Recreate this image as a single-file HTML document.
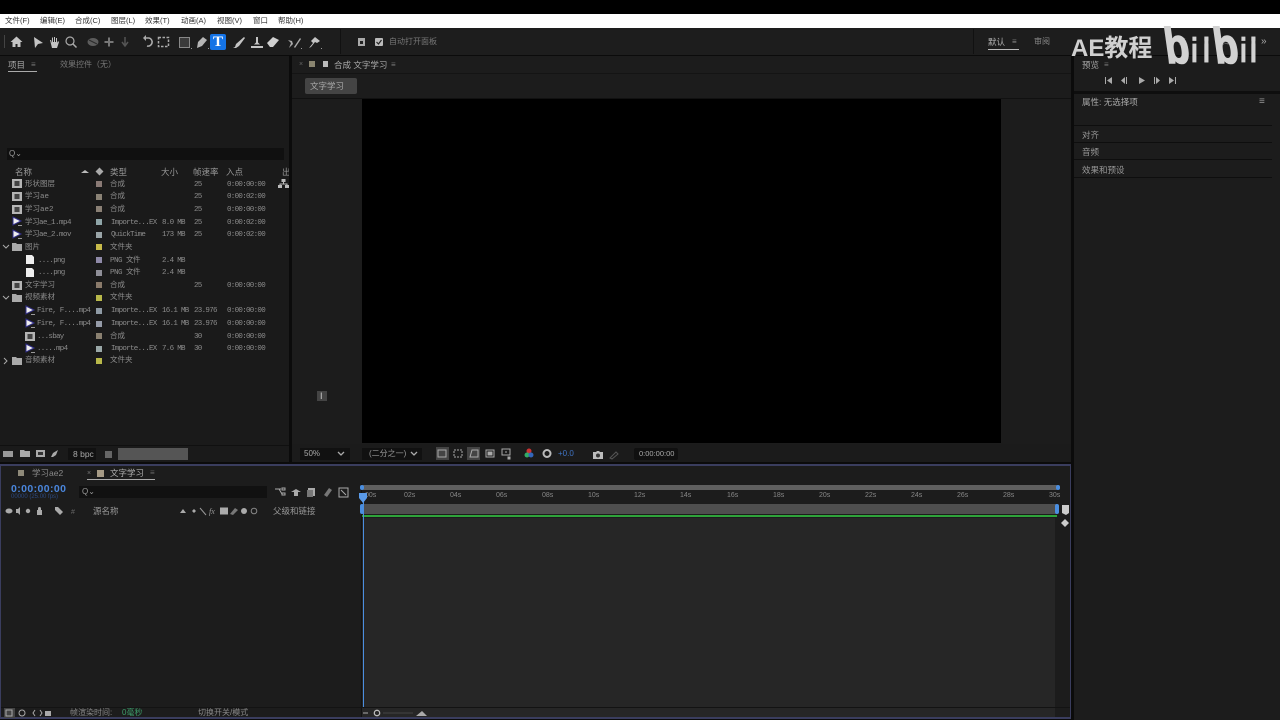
<!DOCTYPE html>
<html lang="zh"><head><meta charset="utf-8"><title>After Effects</title>
<style>
html,body{margin:0;padding:0;background:#0b0b0b}
#p{position:relative;width:1280px;height:720px;overflow:hidden;background:#0b0b0b;font-family:"Liberation Sans","Noto Sans CJK SC",sans-serif;color:#9a9a9a;font-size:8px;filter:blur(.3px)}
#p div,#p svg{position:absolute}
.t{white-space:nowrap;line-height:10px;height:10px}
.m{font-family:"Liberation Mono","Noto Sans CJK SC",monospace;font-size:7.5px;color:#8c8c8c}
.n{letter-spacing:-.7px}
.f{letter-spacing:-.5px}
.sw{width:6px;height:6px}
.w{color:#d2d2d2;font-weight:bold;line-height:1;white-space:nowrap;transform-origin:0 100%;-webkit-text-stroke:.8px #d2d2d2}
.b{font-size:50px;height:50px;top:21px;transform:skewX(8deg) scaleX(.8);-webkit-text-stroke:1.6px #d2d2d2}
.i{font-size:34px;height:34px;top:34px;transform:scaleX(.72)}
</style></head><body><div id="p">
<!-- top -->
<div style="left:0;top:0;width:1280px;height:14px;background:#000"></div>
<div style="left:0;top:14px;width:1280px;height:14px;background:#fff"></div>
<div class="t" style="left:5px;top:16px;color:#333;font-size:7.5px">文件(F)</div>
<div class="t" style="left:40px;top:16px;color:#333;font-size:7.5px">编辑(E)</div>
<div class="t" style="left:75px;top:16px;color:#333;font-size:7.5px">合成(C)</div>
<div class="t" style="left:111px;top:16px;color:#333;font-size:7.5px">图层(L)</div>
<div class="t" style="left:145px;top:16px;color:#333;font-size:7.5px">效果(T)</div>
<div class="t" style="left:181px;top:16px;color:#333;font-size:7.5px">动画(A)</div>
<div class="t" style="left:217px;top:16px;color:#333;font-size:7.5px">视图(V)</div>
<div class="t" style="left:253px;top:16px;color:#333;font-size:7.5px">窗口</div>
<div class="t" style="left:278px;top:16px;color:#333;font-size:7.5px">帮助(H)</div>
<!-- toolbar -->
<div style="left:0;top:28px;width:1280px;height:27px;background:#1d1d1d"></div>
<div style="left:340px;top:29px;width:1px;height:25px;background:#111"></div>
<div style="left:973px;top:29px;width:1px;height:25px;background:#111"></div>
<div style="left:210px;top:34px;width:16px;height:16px;background:#1473e6;border-radius:2px"></div>
<svg style="left:0;top:28px" width="340" height="27" viewBox="0 0 340 27" fill="#c4c4c4">
<rect x="4" y="7" width="1" height="13" fill="#444"/>
<path d="M16.500 8.500l-6 5.500h2v5h3v-3h2v3h3v-5h2z"/>
<path d="M34 9l9 6-5 1-3 4z"/>
<path d="M50 12h1l1 3V9.500h1V14h1V9h1v5h1v-4h1v5l1-2 1 1-2 6h-5z"/>
<circle cx="70" cy="13" r="4" fill="none" stroke="#aaa" stroke-width="1.200"/><path d="M73 16l3.500 3.500" stroke="#aaa" stroke-width="1.500"/>
<ellipse cx="93" cy="14" rx="5.500" ry="4" fill="#5c5c5c"/><path d="M89 12l8 4" stroke="#2a2a2a"/>
<path d="M109 9.500v9M104.500 14h9" stroke="#777" stroke-width="2"/><path d="M125 9v8M122 14l3 4 3-4" stroke="#555" stroke-width="1.500" fill="none"/>
<path d="M144 10h5a3.800 3.800 0 1 1-2 8" fill="none" stroke="#aaa" stroke-width="1.600"/><path d="M146 7v6l-3-3z" fill="#aaa"/>
<rect x="158.500" y="9.500" width="10" height="9" fill="none" stroke="#aaa" stroke-width="1.500" stroke-dasharray="2.500 1.500"/>
<rect x="179.500" y="9.500" width="10" height="10" fill="#3a3a3a" stroke="#888"/><rect x="191" y="20" width="1" height="1" fill="#999"/>
<path d="M197 20l1-6 5-5 4 3-5 6z" fill="#b5b5b5"/><rect x="208" y="20" width="1" height="1" fill="#999"/>
<path d="M233 20l2-1 1-3 8-7 1 1-6 8-3 2z" fill="#c4c4c4"/>
<path d="M251 20h12v-2h-12zM254 16.500h6l-2-2V9h-2v5.500z" fill="#c4c4c4"/>
<path d="M267 15l6-6 6 3-6 7h-3z" fill="#d0d0d0"/>
<path d="M288 12l3 3-2 5 4-4-1-3zM294 19l6-9 1 1-6 9z" fill="#aaa"/><rect x="301" y="20" width="1" height="1" fill="#999"/>
<path d="M309 20l4-5-2-2 4-4 5 4-3 2-2-1-4 5z" fill="#c4c4c4"/><rect x="321" y="20" width="1" height="1" fill="#999"/>
</svg>
<div class="t" style="left:212px;top:34px;width:12px;height:16px;text-align:center;color:#fff;font:bold 15px/16px 'Liberation Serif',serif">T</div>
<div style="left:358px;top:38px;width:7px;height:8px;background:#aaa"></div><div style="left:360px;top:41px;width:3px;height:3px;background:#222"></div>
<div style="left:375px;top:38px;width:8px;height:8px;background:#bbb;border-radius:1px"></div>
<svg style="left:375px;top:38px" width="8" height="8"><path d="M1.500 4l2 2 3-4" fill="none" stroke="#222" stroke-width="1.200"/></svg>
<div class="t" style="left:389px;top:37px;color:#777">自动打开面板</div>
<div class="t" style="left:988px;top:37px;color:#b0b0b0;font-size:8.500px">默认</div>
<div style="left:988px;top:49px;width:31px;height:1px;background:#bbb"></div>
<div class="t" style="left:1012px;top:37px;color:#888">≡</div>
<div class="t" style="left:1034px;top:37px;color:#888">审阅</div>
<div class="t" style="left:1178px;top:37px;color:#777">标</div>
<div class="t" style="left:1223px;top:37px;color:#777">库</div>
<div class="t" style="left:1261px;top:37px;color:#aaa;font-size:10px">»</div>

<!-- project panel -->
<div style="left:0;top:56px;width:289px;height:406px;background:#1a1a1a"></div>
<div class="t" style="left:8px;top:60px;color:#aaa;font-size:8.500px">项目</div>
<div style="left:8px;top:71px;width:29px;height:1px;background:#aaa"></div>
<div class="t" style="left:31px;top:60px;color:#777">≡</div>
<div class="t" style="left:60px;top:60px;color:#777">效果控件（无）</div>
<div style="left:7px;top:148px;width:277px;height:12px;background:#101010"></div>
<div class="t" style="left:9px;top:149px;color:#999;font-size:8px">Q⌄</div>
<div class="t" style="left:15px;top:167px;color:#999;font-size:8.500px">名称</div>
<div style="left:81px;top:170px;width:0;height:0;border:4.500px solid transparent;border-top:0;border-bottom:3px solid #bbb"></div>
<div style="left:96px;top:168px;width:7px;height:7px;background:#aaa;transform:rotate(45deg) scale(.8)"></div>
<div class="t" style="left:110px;top:167px;color:#999;font-size:8.500px">类型</div>
<div class="t" style="left:161px;top:167px;color:#999;font-size:8.500px">大小</div>
<div class="t" style="left:193px;top:167px;color:#999;font-size:8.500px">帧速率</div>
<div class="t" style="left:226px;top:167px;color:#999;font-size:8.500px">入点</div>
<div class="t" style="left:282px;top:167px;color:#999;font-size:8.500px;width:7px;overflow:hidden">出</div>
<svg style="left:278px;top:179px" width="11" height="10"><path d="M3.500 0h4v3h-4zM0 6h4v3H0zM7 6h4v3H7z" fill="#bbb"/><path d="M5.500 3v2M2 6V5h7v1" stroke="#bbb" fill="none"/></svg>

<!-- rows -->
<svg style="left:0;top:176px" width="110" height="195" fill="#c8c8c8">
<rect x="12" y="3" width="10" height="9" fill="#b5b5b5"/><rect x="14.500" y="5" width="5" height="5" fill="#444"/>
<rect x="12" y="16" width="10" height="9" fill="#b5b5b5"/><rect x="14.500" y="18" width="5" height="5" fill="#444"/>
<rect x="12" y="29" width="10" height="9" fill="#b5b5b5"/><rect x="14.500" y="31" width="5" height="5" fill="#444"/>
<path d="M13 41l8 4-8 4z" fill="#eee" stroke="#33308a"/><rect x="18" y="49" width="4" height="1" fill="#999"/>
<path d="M13 54l8 4-8 4z" fill="#eee" stroke="#33308a"/><rect x="18" y="62" width="4" height="1" fill="#999"/>
<path d="M3 69l3 3 3-3" fill="none" stroke="#aaa"/>
<path d="M12 67h4l1 1h5v7H12z" fill="#aaa"/>
<path d="M26 79h6l2 2v7h-8z" fill="#eee"/><path d="M26 92h6l2 2v7h-8z" fill="#eee"/>
<rect x="12" y="105" width="10" height="9" fill="#b5b5b5"/><rect x="14.500" y="107" width="5" height="5" fill="#444"/>
<path d="M3 120l3 3 3-3" fill="none" stroke="#aaa"/>
<path d="M12 118h4l1 1h5v7H12z" fill="#aaa"/>
<path d="M26 130l8 4-8 4z" fill="#eee" stroke="#33308a"/><rect x="31" y="138" width="4" height="1" fill="#999"/>
<path d="M26 143l8 4-8 4z" fill="#eee" stroke="#33308a"/><rect x="31" y="151" width="4" height="1" fill="#999"/>
<rect x="25" y="156" width="10" height="9" fill="#b5b5b5"/><rect x="27.500" y="158" width="5" height="5" fill="#444"/>
<path d="M26 168l8 4-8 4z" fill="#eee" stroke="#33308a"/><rect x="31" y="176" width="4" height="1" fill="#999"/>
<path d="M4 182l3 3-3 3" fill="none" stroke="#aaa"/>
<path d="M12 181h4l1 1h5v7H12z" fill="#aaa"/>
<rect x="96" y="5" width="6" height="6" fill="#8a7a75"/><rect x="96" y="18" width="6" height="6" fill="#8a8275"/><rect x="96" y="30" width="6" height="6" fill="#8a8075"/>
<rect x="96" y="43" width="6" height="6" fill="#8fa5a8"/><rect x="96" y="56" width="6" height="6" fill="#9aa5a8"/>
<rect x="96" y="68" width="6" height="6" fill="#c8bb4a"/><rect x="96" y="81" width="6" height="6" fill="#8f8aa8"/><rect x="96" y="94" width="6" height="6" fill="#8f8f98"/>
<rect x="96" y="106" width="6" height="6" fill="#8a7a6a"/><rect x="96" y="119" width="6" height="6" fill="#b8b84a"/>
<rect x="96" y="132" width="6" height="6" fill="#8f9ba5"/><rect x="96" y="145" width="6" height="6" fill="#959ba8"/>
<rect x="96" y="157" width="6" height="6" fill="#8a8070"/><rect x="96" y="170" width="6" height="6" fill="#9aa8a8"/>
<rect x="96" y="182" width="6" height="6" fill="#b8b84a"/>
</svg>
<div class="t m" style="left:25px;top:180px">形状图层</div><div class="t m" style="left:110px;top:180px">合成</div><div class="t m n" style="left:194px;top:180px">25</div><div class="t m n" style="left:227px;top:180px">0:00:00:00</div>
<div class="t m" style="left:25px;top:192px">学习ae</div><div class="t m" style="left:110px;top:192px">合成</div><div class="t m n" style="left:194px;top:192px">25</div><div class="t m n" style="left:227px;top:192px">0:00:02:00</div>
<div class="t m" style="left:25px;top:205px">学习ae2</div><div class="t m" style="left:110px;top:205px">合成</div><div class="t m n" style="left:194px;top:205px">25</div><div class="t m n" style="left:227px;top:205px">0:00:00:00</div>
<div class="t m f" style="left:25px;top:218px">学习ae_1.mp4</div><div class="t m n" style="left:111px;top:218px">Importe...EX</div><div class="t m n" style="left:162px;top:218px">8.0 MB</div><div class="t m n" style="left:194px;top:218px">25</div><div class="t m n" style="left:227px;top:218px">0:00:02:00</div>
<div class="t m f" style="left:25px;top:230px">学习ae_2.mov</div><div class="t m n" style="left:111px;top:230px">QuickTime</div><div class="t m n" style="left:162px;top:230px">173 MB</div><div class="t m n" style="left:194px;top:230px">25</div><div class="t m n" style="left:227px;top:230px">0:00:02:00</div>
<div class="t m" style="left:25px;top:243px">图片</div><div class="t m" style="left:110px;top:243px">文件夹</div>
<div class="t m n" style="left:38px;top:256px">....png</div><div class="t m f" style="left:110px;top:256px">PNG 文件</div><div class="t m n" style="left:162px;top:256px">2.4 MB</div>
<div class="t m n" style="left:38px;top:268px">....png</div><div class="t m f" style="left:110px;top:268px">PNG 文件</div><div class="t m n" style="left:162px;top:268px">2.4 MB</div>
<div class="t m" style="left:25px;top:281px">文字学习</div><div class="t m" style="left:110px;top:281px">合成</div><div class="t m n" style="left:194px;top:281px">25</div><div class="t m n" style="left:227px;top:281px">0:00:00:00</div>
<div class="t m" style="left:25px;top:293px">视频素材</div><div class="t m" style="left:110px;top:293px">文件夹</div>
<div class="t m n" style="left:37px;top:306px">Fire, F....mp4</div><div class="t m n" style="left:111px;top:306px">Importe...EX</div><div class="t m n" style="left:162px;top:306px">16.1 MB</div><div class="t m n" style="left:194px;top:306px">23.976</div><div class="t m n" style="left:227px;top:306px">0:00:00:00</div>
<div class="t m n" style="left:37px;top:319px">Fire, F....mp4</div><div class="t m n" style="left:111px;top:319px">Importe...EX</div><div class="t m n" style="left:162px;top:319px">16.1 MB</div><div class="t m n" style="left:194px;top:319px">23.976</div><div class="t m n" style="left:227px;top:319px">0:00:00:00</div>
<div class="t m n" style="left:37px;top:332px">...sbay</div><div class="t m" style="left:110px;top:332px">合成</div><div class="t m n" style="left:194px;top:332px">30</div><div class="t m n" style="left:227px;top:332px">0:00:00:00</div>
<div class="t m n" style="left:37px;top:344px">.....mp4</div><div class="t m n" style="left:111px;top:344px">Importe...EX</div><div class="t m n" style="left:162px;top:344px">7.6 MB</div><div class="t m n" style="left:194px;top:344px">30</div><div class="t m n" style="left:227px;top:344px">0:00:00:00</div>
<div class="t m" style="left:25px;top:356px">音频素材</div><div class="t m" style="left:110px;top:356px">文件夹</div>

<!-- project footer -->
<div style="left:0;top:445px;width:289px;height:1px;background:#101010"></div>
<svg style="left:0;top:446px" width="115" height="15" fill="#aaa">
<rect x="3" y="5" width="10" height="6" fill="#999"/><path d="M20 4h4l1 1h5v6H20z"/><rect x="36" y="4" width="9" height="7"/><rect x="38" y="6" width="5" height="3" fill="#333"/>
<path d="M51 11l2-4 5-3-2 5-3 2z"/><path d="M105 5h7v7h-7z" fill="#666"/>
</svg>
<div style="left:68px;top:448px;width:28px;height:12px;background:#111"></div>
<div class="t" style="left:73px;top:449px;color:#aaa;font-size:8.500px">8 bpc</div>
<div style="left:118px;top:448px;width:70px;height:12px;background:#555"></div>

<!-- comp panel -->
<div style="left:292px;top:56px;width:779px;height:406px;background:#1c1c1c"></div>
<div class="t" style="left:299px;top:60px;color:#666;font-size:7px">×</div>
<div class="sw" style="left:309px;top:61px;background:#8a8570"></div>
<div style="left:323px;top:61px;width:5px;height:6px;background:#bbb"></div>
<div class="t" style="left:334px;top:60px;color:#aaa;font-size:8.500px">合成 文字学习</div>
<div class="t" style="left:391px;top:60px;color:#777">≡</div>
<div style="left:292px;top:73px;width:779px;height:1px;background:#141414"></div>
<div style="left:305px;top:78px;width:52px;height:16px;background:#444;border-radius:2px"></div>
<div class="t" style="left:310px;top:81px;color:#aaa;font-size:8.500px">文字学习</div>
<div style="left:292px;top:98px;width:779px;height:1px;background:#111"></div>
<div style="left:362px;top:99px;width:639px;height:344px;background:#000"></div>
<div style="left:317px;top:391px;width:10px;height:10px;background:#444"></div>
<div class="t" style="left:320px;top:391px;color:#ccc;font-size:9px">I</div>
<!-- viewer footer -->
<div style="left:292px;top:444px;width:779px;height:18px;background:#1b1b1b"></div>
<div style="left:300px;top:448px;width:50px;height:12px;background:#111"></div>
<div class="t" style="left:304px;top:449px;color:#aaa;font-size:8px">50%</div>
<svg style="left:337px;top:451px" width="8" height="6"><path d="M1 1l3 3 3-3" fill="none" stroke="#aaa" stroke-width="1.300"/></svg>
<div style="left:362px;top:448px;width:60px;height:12px;background:#111"></div>
<div class="t" style="left:369px;top:449px;color:#999;font-size:8px">(二分之一)</div>
<svg style="left:410px;top:451px" width="8" height="6"><path d="M1 1l3 3 3-3" fill="none" stroke="#aaa" stroke-width="1.300"/></svg>
<svg style="left:434px;top:446px" width="190" height="16" fill="none" stroke="#aaa">
<rect x="2" y="1" width="13" height="13" fill="#444" stroke="none"/><rect x="4" y="4" width="8" height="7"/>
<rect x="20" y="4" width="8" height="7" stroke-dasharray="2 1"/>
<rect x="33" y="1" width="13" height="13" fill="#444" stroke="none"/><path d="M36 11l2-7h6v7z"/>
<rect x="52" y="4" width="8" height="7"/><rect x="54" y="6" width="4" height="3" fill="#aaa"/>
<rect x="68" y="3" width="8" height="6"/><path d="M72 5v2"/><rect x="74" y="11" width="2" height="2" fill="#aaa"/>
<circle cx="95" cy="5" r="2.500" fill="#c33" stroke="none"/><circle cx="93" cy="9" r="2.500" fill="#3a6" stroke="none"/><circle cx="97" cy="9" r="2.500" fill="#36b" stroke="none"/>
<circle cx="113" cy="7.500" r="3.500" stroke-width="2" stroke="#bbb"/>
</svg>
<div class="t" style="left:558px;top:449px;color:#3f74c5;font-size:8px">+0.0</div>
<svg style="left:592px;top:449px" width="30" height="12"><path d="M1 3h3l1-1h2l1 1h3v7H1z" fill="#bbb"/><circle cx="6" cy="6.500" r="2" fill="#333"/><path d="M18 9l6-6 2 2-6 5z" fill="none" stroke="#555"/></svg>
<div style="left:634px;top:448px;width:44px;height:12px;background:#101010;border-radius:2px"></div>
<div class="t" style="left:639px;top:449px;color:#aaa;font-size:7.500px">0:00:00:00</div>

<!-- timeline -->
<div style="left:0;top:464px;width:1071px;height:255px;background:#3a3d5e"></div>
<div style="left:1px;top:466px;width:1069px;height:251px;background:#1c1c1c"></div>
<div class="sw" style="left:18px;top:470px;background:#8f8a7a"></div>
<div class="t" style="left:32px;top:468px;color:#888;font-size:8.500px">学习ae2</div>
<div class="t" style="left:87px;top:469px;color:#777;font-size:7px">×</div>
<div class="sw" style="left:97px;top:470px;background:#a59a85;width:7px;height:7px"></div>
<div class="t" style="left:110px;top:468px;color:#b0b0b0;font-size:8.500px">文字学习</div>
<div style="left:87px;top:479px;width:68px;height:1px;background:#aaa"></div>
<div class="t" style="left:150px;top:468px;color:#666">≡</div>
<div class="t" style="left:11px;top:483px;height:12px;color:#4a86dc;font:bold 10.500px/12px 'Liberation Sans',sans-serif;letter-spacing:.4px">0:00:00:00</div>
<div class="t" style="left:11px;top:494px;color:#2d4a80;font-size:6px;line-height:7px;height:7px">00000 (25.00 fps)</div>
<div style="left:79px;top:486px;width:188px;height:12px;background:#111"></div>
<div class="t" style="left:82px;top:487px;color:#999">Q⌄</div>
<svg style="left:274px;top:486px" width="78" height="13" fill="#aaa">
<path d="M1 3h6M5 3l3 5M8 2h3v2H8zM8 7h3v2H8z" stroke="#aaa" fill="none"/><path d="M17 6l5-3 5 3h-3v4h-4V6z"/><path d="M34 2h7v8h-7z"/><path d="M33 4h6v7h-6z" fill="#777"/>
<path d="M50 9l5-7 3 2-5 7z" fill="#777"/>
<rect x="65" y="2" width="9" height="9" fill="none" stroke="#aaa"/><path d="M67 4l5 5" stroke="#aaa"/>
</svg>
<svg style="left:4px;top:505px" width="260" height="12" fill="#aaa">
<ellipse cx="5" cy="6" rx="3.500" ry="2.500"/><path d="M12 4h2l2-2v8l-2-2h-2z"/><circle cx="24" cy="6" r="2.200"/><path d="M33 5h1V3.500a1.500 1.500 0 0 1 3 0V5h1v5h-5z"/><path d="M51 2h3l5 5-3 3-5-5z"/>
<text x="67" y="9" font-size="7" fill="#666" font-family="Liberation Sans">#</text>
<path d="M176 8l3-4 3 4zM188 6l2-2 2 2-2 2z"/><path d="M196 3l6 7" stroke="#999"/><text x="205" y="9" font-size="8" fill="#999" font-style="italic" font-family="Liberation Serif">fx</text>
<rect x="216" y="2.500" width="8" height="7"/><path d="M226 9l5-6 3 2-5 5z" fill="#777"/><circle cx="240" cy="6" r="3"/><circle cx="250" cy="6" r="2.800" fill="none" stroke="#888"/>
</svg>
<div class="t" style="left:93px;top:506px;color:#999;font-size:8.500px">源名称</div>
<div class="t" style="left:273px;top:506px;color:#999;font-size:8.500px">父级和链接</div>
<div style="left:1px;top:518px;width:360px;height:199px;background:#1c1c1c"></div>
<div style="left:361px;top:518px;width:694px;height:199px;background:#262626"></div>
<div style="left:1055px;top:500px;width:15px;height:217px;background:#1c1c1c"></div>
<div style="left:361px;top:484px;width:1px;height:233px;background:#111"></div>
<!-- ruler -->
<div style="left:362px;top:485px;width:696px;height:5px;background:#5f5f5f;border-radius:2px"></div>
<div style="left:360px;top:485px;width:4px;height:5px;background:#4a8ee0;border-radius:2px"></div>
<div style="left:1056px;top:485px;width:4px;height:5px;background:#4a8ee0;border-radius:2px"></div>
<div class="t" style="left:365px;top:491px;color:#888;font-size:7px">00s</div>
<div class="t" style="left:404px;top:491px;color:#888;font-size:7px">02s</div>
<div class="t" style="left:450px;top:491px;color:#888;font-size:7px">04s</div>
<div class="t" style="left:496px;top:491px;color:#888;font-size:7px">06s</div>
<div class="t" style="left:542px;top:491px;color:#888;font-size:7px">08s</div>
<div class="t" style="left:588px;top:491px;color:#888;font-size:7px">10s</div>
<div class="t" style="left:634px;top:491px;color:#888;font-size:7px">12s</div>
<div class="t" style="left:680px;top:491px;color:#888;font-size:7px">14s</div>
<div class="t" style="left:727px;top:491px;color:#888;font-size:7px">16s</div>
<div class="t" style="left:773px;top:491px;color:#888;font-size:7px">18s</div>
<div class="t" style="left:819px;top:491px;color:#888;font-size:7px">20s</div>
<div class="t" style="left:865px;top:491px;color:#888;font-size:7px">22s</div>
<div class="t" style="left:911px;top:491px;color:#888;font-size:7px">24s</div>
<div class="t" style="left:957px;top:491px;color:#888;font-size:7px">26s</div>
<div class="t" style="left:1003px;top:491px;color:#888;font-size:7px">28s</div>
<div class="t" style="left:1049px;top:491px;color:#888;font-size:7px">30s</div>
<!-- work area -->
<div style="left:362px;top:504px;width:695px;height:10px;background:#4e4e4e"></div>
<div style="left:360px;top:504px;width:4px;height:10px;background:#4a8ee0;border-radius:2px"></div>
<div style="left:1055px;top:504px;width:4px;height:10px;background:#4a8ee0;border-radius:2px"></div>
<div style="left:362px;top:515px;width:695px;height:2px;background:#2ea33a"></div>
<div style="left:363px;top:500px;width:1px;height:207px;background:#4a8ee0"></div>
<svg style="left:359px;top:493px" width="9" height="10"><path d="M0 0h8v5l-4 5-4-5z" fill="#5a9ae8"/></svg>
<svg style="left:1060px;top:505px" width="11" height="24" fill="#ccc"><path d="M2 0h7v8l-3 2-4-2z"/><path d="M1 18l4-4 4 4-4 4z"/></svg>
<!-- status -->
<div style="left:1px;top:707px;width:1069px;height:1px;background:#131313"></div>
<div style="left:4px;top:708px;width:11px;height:10px;background:#444"></div>
<svg style="left:5px;top:708px" width="48" height="10" fill="none" stroke="#aaa"><rect x="1" y="2" width="6" height="6"/><circle cx="17" cy="5" r="3"/><path d="M30 2l-2 3 2 3M35 2l2 3-2 3"/><rect x="40" y="3" width="6" height="5" fill="#aaa" stroke="none"/></svg>
<div class="t" style="left:70px;top:708px;color:#888">帧渲染时间:</div>
<div class="t" style="left:122px;top:708px;color:#3d9d6a">0毫秒</div>
<div class="t" style="left:198px;top:708px;color:#888">切换开关/模式</div>
<svg style="left:362px;top:708px" width="66" height="10"><path d="M1 5h5" stroke="#aaa"/><circle cx="15" cy="5" r="2.700" fill="none" stroke="#bbb" stroke-width="1.300"/><path d="M21 5h30" stroke="#444"/><path d="M54 8l6-5 5 5z" fill="#aaa"/></svg>

<!-- right column -->
<div style="left:1074px;top:56px;width:206px;height:664px;background:#1c1c1c"></div>
<div class="t" style="left:1082px;top:60px;color:#aaa;font-size:8.500px">预览</div>
<div class="t" style="left:1104px;top:60px;color:#777">≡</div>
<svg style="left:1104px;top:76px" width="76" height="10" fill="#aaa"><path d="M1 1h1v7H1zM3 4.500L8 1v7z"/><path d="M17 4.500L21 1v7zM22 1h1v7h-1z"/><path d="M35 1l6 3.500L35 8z"/><path d="M50 1h1v7h-1zM52 1l4 3.500L52 8z"/><path d="M65 1l5 3.500L65 8zM71 1h1v7h-1z"/></svg>
<div style="left:1074px;top:91px;width:206px;height:3px;background:#0e0e0e"></div>
<div class="t" style="left:1082px;top:97px;color:#aaa;font-size:8.500px">属性:  无选择项</div>
<div class="t" style="left:1259px;top:97px;color:#999;font-size:10px">≡</div>
<div style="left:1074px;top:125px;width:198px;height:1px;background:#0e0e0e"></div>
<div class="t" style="left:1082px;top:130px;color:#999;font-size:8.500px">对齐</div>
<div style="left:1074px;top:142px;width:198px;height:1px;background:#0e0e0e"></div>
<div class="t" style="left:1082px;top:147px;color:#999;font-size:8.500px">音频</div>
<div style="left:1074px;top:159px;width:198px;height:1px;background:#0e0e0e"></div>
<div class="t" style="left:1082px;top:165px;color:#999;font-size:8.500px">效果和预设</div>
<div style="left:1074px;top:177px;width:198px;height:1px;background:#0e0e0e"></div>
<!-- watermark -->
<div class="t" style="left:1071px;top:36px;height:26px;line-height:26px;color:#d0d0d0;font-size:24px;font-weight:bold">AE教程</div>
<div class="w b" style="left:1168px">b</div>
<div class="w i" style="left:1190.500px">i</div>
<div class="w i" style="left:1202.500px">l</div>
<div class="w i" style="left:1202.500px">i</div>
<div class="w b" style="left:1217px">b</div>
<div class="w i" style="left:1239.500px">i</div>
<div class="w i" style="left:1249.500px">l</div>
<div class="w i" style="left:1249.500px">i</div>
</div></body></html>
